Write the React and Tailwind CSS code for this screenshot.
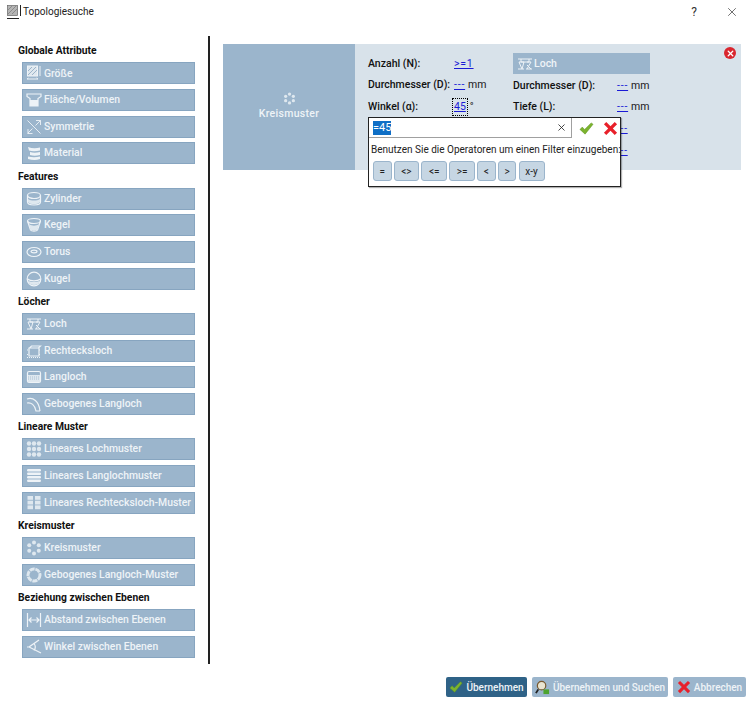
import { X } from "lucide-react";

const stroke = { fill: "none", stroke: "#eef3f7", strokeWidth: 1.2 };

// small white feature glyphs used on the blue buttons
const glyphs = {
  size: (
    <>
      <rect x="1.500" y="1" width="10" height="10" fill="#dfe8ef" stroke="#eef3f7" strokeWidth="1" />
      <path d="M2 10l8-8M2 6l4-4M6 10l5-5" stroke="#8aa6c0" strokeWidth="0.8" />
      <path d="M14 1v10M1 14h11M12 14l-1.500-1M1 14l1.500-1" {...stroke} strokeWidth="1" />
    </>
  ),
  area: (
    <>
      <path d="M1 2h14v2.500l-3 2V14H4V6.500l-3-2z" {...stroke} />
      <path d="M4 8h8v6H4z" fill="#eef3f7" />
    </>
  ),
  symmetry: <path d="M1.500 14.500l5-5M2 10v4.500h4.500M9.500 6.500l5-5M10 1.500h4.500V6M1.500 1.500l13 13" {...stroke} strokeWidth="0.9" />,
  material: <path d="M2 2c4 1.500 8 1.500 12 .5v3c-4 1-8 1-11 0zM4 7c3 1 6 1 10 0v3c-4 1-7 1-10 0zM2 11.500c4 1 8 1 12 0V14c-4 1.500-8 1-12 0z" fill="#eef3f7" />,
  cylinder: (
    <>
      <ellipse cx="8" cy="4.500" rx="6.500" ry="3" {...stroke} />
      <path d="M1.500 4.500v6.500c0 2 3 3 6.500 3s6.500-1 6.500-3V4.500" {...stroke} />
      <path d="M2 8c3 2 9 2 12 0v3c-2 3-10 3-12 0z" fill="#dfe8ef" />
    </>
  ),
  cone: (
    <>
      <ellipse cx="8" cy="4" rx="6.500" ry="2.500" {...stroke} />
      <path d="M1.500 4l3 9c1 1.500 6 1.500 7 0l3-9" {...stroke} />
      <path d="M3 7.500c3 1.500 7 1.500 10 0l-1.500 5c-1 1.500-6 1.500-7 0z" fill="#dfe8ef" />
    </>
  ),
  torus: (
    <>
      <ellipse cx="8" cy="8" rx="7" ry="4.500" {...stroke} />
      <ellipse cx="8" cy="7.500" rx="3" ry="1.300" {...stroke} />
    </>
  ),
  sphere: (
    <>
      <circle cx="8" cy="8" r="6.800" {...stroke} />
      <path d="M1.500 8c3 2.500 10 2.500 13 0" {...stroke} />
      <path d="M2 9.500c3 2 9 2 12 0-1 3-3 4.500-6 4.500s-5-1.500-6-4.500z" fill="#dfe8ef" />
    </>
  ),
  hole: <path d="M1 3h14M4 3v3h8V3M1 13h6M9 13h6M2 6h5M2 6l3 7M7 6L5 13M14 6l-4 7M10 6h4M10 9l4 4" {...stroke} strokeWidth="1" />,
  rect: (
    <>
      <path d="M3.500 5l2-2h9l-2 2zM3 5h10v8H3z" {...stroke} />
      <path d="M1 14.500h14M1 11.500h2M13 11.500h2M1 7h2M13 7h2" stroke="#eef3f7" strokeWidth="1" strokeDasharray="1 1" />
    </>
  ),
  slot: (
    <>
      <rect x="1.500" y="2.500" width="13" height="11" rx="1.500" {...stroke} />
      <rect x="2" y="6" width="12" height="7" fill="#dfe8ef" />
      <path d="M2 8h12M2 10h12" stroke="#8aa6c0" strokeWidth="0.6" strokeDasharray="1 1" />
    </>
  ),
  bent: <path d="M1 3c6-2 12 2 13 12M1 7c4-1 8 2 9 8h4" {...stroke} />,
  holes: (
    <>
      {[3, 8, 13].flatMap((x) =>
        [2.500, 8, 13.500].map((y) => <circle key={`${x}-${y}`} cx={x} cy={y} r="2.200" fill="#dfe8ef" />)
      )}
    </>
  ),
  slots: (
    <>
      {[1, 4.500, 8, 11.500].map((y) => (
        <rect key={y} x="1" y={y} width="14" height="2.400" rx="1.200" fill="#eef3f7" />
      ))}
    </>
  ),
  rects: (
    <>
      {[1.500, 9].flatMap((x) =>
        [1, 5.700, 10.400].map((y) => <rect key={`${x}-${y}`} x={x} y={y} width="5.500" height="3.800" fill="#dfe8ef" />)
      )}
    </>
  ),
  circle: (
    <>
      {[0, 60, 120, 180, 240, 300].map((a) => (
        <circle
          key={a}
          cx={8 + 5.500 * Math.sin((a * Math.PI) / 180)}
          cy={8 - 5.500 * Math.cos((a * Math.PI) / 180)}
          r="2"
          fill="#dfe8ef"
        />
      ))}
    </>
  ),
  ring: <circle cx="8" cy="8" r="6" fill="none" stroke="#dfe8ef" strokeWidth="3" strokeDasharray="5 0.800" />,
  distance: <path d="M1.500 1v14M14.500 1v14M3 8h10M5.500 5.500L3 8l2.500 2.500M10.500 5.500L13 8l-2.500 2.500" {...stroke} />,
  angle: <path d="M13 1L3 8l12 6M1 8h2M8 4.500c1.500 2 1.500 5 0 7" {...stroke} />,
};

function Glyph({ name, className = "w-[16px] h-[16px]" }) {
  return (
    <svg viewBox="0 0 16 16" className={`${className} shrink-0`}>
      {glyphs[name]}
    </svg>
  );
}

const groups = [
  {
    title: "Globale Attribute",
    items: [
      ["size", "Größe"],
      ["area", "Fläche/Volumen"],
      ["symmetry", "Symmetrie"],
      ["material", "Material"],
    ],
  },
  {
    title: "Features",
    items: [
      ["cylinder", "Zylinder"],
      ["cone", "Kegel"],
      ["torus", "Torus"],
      ["sphere", "Kugel"],
    ],
  },
  {
    title: "Löcher",
    items: [
      ["hole", "Loch"],
      ["rect", "Rechtecksloch"],
      ["slot", "Langloch"],
      ["bent", "Gebogenes Langloch"],
    ],
  },
  {
    title: "Lineare Muster",
    items: [
      ["holes", "Lineares Lochmuster"],
      ["slots", "Lineares Langlochmuster"],
      ["rects", "Lineares Rechtecksloch-Muster"],
    ],
  },
  {
    title: "Kreismuster",
    items: [
      ["circle", "Kreismuster"],
      ["ring", "Gebogenes Langloch-Muster"],
    ],
  },
  {
    title: "Beziehung zwischen Ebenen",
    items: [
      ["distance", "Abstand zwischen Ebenen"],
      ["angle", "Winkel zwischen Ebenen"],
    ],
  },
];

function Check({ className }) {
  return (
    <svg viewBox="0 0 16 16" className={className}>
      <path d="M1 9l2.500-2.500L6 9l7-7 2 1.500L6.500 14z" fill="#7cb32e" stroke="#5a8f1f" strokeWidth="0.5" />
    </svg>
  );
}

function Cross({ className }) {
  return (
    <svg viewBox="0 0 16 16" className={className}>
      <path d="M1 3.500L3.500 1 8 5.500 12.500 1 15 3.500 10.500 8l4.500 4.500-2.500 2.500L8 10.500 3.500 15 1 12.500 5.500 8z" fill="#e8202a" />
    </svg>
  );
}

function Dashes({ children = "---" }) {
  return <span className="text-[#1a1ad6] underline tracking-[0.8px]">{children}</span>;
}

function FilterRow({ label, value, unit, left }) {
  return (
    <div className="h-[21.500px] flex items-center whitespace-nowrap text-[10.500px]">
      <span className={`font-medium text-[#111] ${left}`}>{label}</span>
      {value}
      {unit && <span className="ml-[3px]">{unit}</span>}
    </div>
  );
}

export default function App() {
  return (
    <div className="w-[750px] h-[704px] bg-white flex flex-col text-[10px] text-[#1a1a1a] font-['Roboto',sans-serif] overflow-hidden">
      {/* Title bar */}
      <div className="h-[23px] flex items-center pl-[6px] shrink-0">
        <svg viewBox="0 0 16 16" className="w-[16px] h-[16px] shrink-0">
          <rect x="1.500" y="1.500" width="10" height="10" fill="#b5b5b5" stroke="#666" strokeWidth="0.7" />
          <path d="M2 10l8-8M2 6l4-4M6 10l5-5" stroke="#777" strokeWidth="0.7" />
          <path d="M14.500 1v11M1 14.500h12" stroke="#222" strokeWidth="1" />
        </svg>
        <span className="ml-[1px] text-[10px] text-[#222]">Topologiesuche</span>
        <span className="ml-auto text-[12px] mr-[28px] text-[#333]">?</span>
        <X className="w-[14px] h-[14px] mr-[11px] text-[#333]" strokeWidth={1.2} />
      </div>

      <div className="flex h-[641px] pt-[13px] shrink-0">
        {/* Sidebar */}
        <aside className="w-[210px] h-[628px] border-r-2 border-[#222] pl-[18px] pr-[13px] pt-[3px] shrink-0">
          {groups.map((group) => (
            <div key={group.title}>
              <div className="h-[23.330px] flex items-center font-bold text-[10.300px] text-[#111] whitespace-nowrap pt-[1px]">
                {group.title}
              </div>
              <div className="flex flex-col gap-[4.670px] pl-[4px]">
                {group.items.map(([icon, label]) => (
                  <button
                    key={label}
                    className="h-[22px] flex items-center gap-[2px] bg-[#9bb5cc] border border-[#87a5c0] pl-[3px] font-medium text-[10.400px] text-[#eef3f7] whitespace-nowrap"
                  >
                    <Glyph name={icon} />
                    {label}
                  </button>
                ))}
              </div>
            </div>
          ))}
        </aside>

        {/* Selected feature card */}
        <main className="flex-1 pl-[13px] pr-[9px] pt-[8px]">
          <div className="relative h-[126px] flex bg-[#d8e2ea]">
            <div className="w-[132px] bg-[#9bb5cc] flex flex-col items-center justify-center text-[#eef3f7] font-medium text-[10.500px] tracking-[0.3px]">
              <Glyph name="circle" className="w-[13px] h-[13px]" />
              <span className="mt-[1px]">Kreismuster</span>
            </div>

            <div className="pl-[13px] pt-[9px] w-[158px]">
              <FilterRow label="Anzahl (N):" left="w-[86px]" value={<Dashes>{">=1"}</Dashes>} />
              <FilterRow label="Durchmesser (D):" left="w-[86px]" value={<Dashes />} unit="mm" />
              <FilterRow
                label="Winkel (α):"
                left="w-[85px]"
                value={<span className="text-[#1a1ad6] underline outline-1 outline-dotted outline-black px-[1px]">45</span>}
                unit="°"
              />
            </div>

            <div className="w-[137px] pt-[9px]">
              <div className="h-[21px] flex items-center gap-[1px] bg-[#9bb5cc] pl-[4px] font-medium text-[10.500px] text-[#eef3f7]">
                <Glyph name="hole" />
                Loch
              </div>
              <div className="pt-[1px]">
                <FilterRow label="Durchmesser (D):" left="w-[104px]" value={<Dashes />} unit="mm" />
                <FilterRow label="Tiefe (L):" left="w-[104px]" value={<Dashes />} unit="mm" />
                <div className="h-[21.500px] flex items-center pl-[104px]">
                  <Dashes />
                </div>
                <div className="h-[21.500px] flex items-center pl-[104px]">
                  <Dashes />
                </div>
              </div>
            </div>

            <span className="absolute top-[3px] right-[5px] w-[12px] h-[12px] rounded-full bg-[#d9262e] flex items-center justify-center">
              <X className="w-[9px] h-[9px] text-white" strokeWidth={3.500} />
            </span>

            {/* Operator popup */}
            <div className="absolute left-[145px] top-[73px] w-[253px] h-[70px] bg-white border border-[#222] shadow-[1px_1px_1px_rgba(0,0,0,0.3)]">
              <div className="flex items-center h-[20px]">
                <div className="w-[203px] h-[20px] border-b border-r border-[#a0a0a0] flex items-center pl-[4px]">
                  <span className="bg-[#0f6fc6] text-white text-[11px] leading-[14px]">=45</span>
                  <X className="ml-auto mr-[4px] w-[11px] h-[11px] text-[#222]" strokeWidth={1.800} />
                </div>
                <Check className="w-[15px] h-[15px] ml-[7px]" />
                <Cross className="w-[15px] h-[15px] ml-[9px]" />
              </div>
              <div className="h-[23px] flex items-center pl-[2px] text-[#222] whitespace-nowrap">
                Benutzen Sie die Operatoren um einen Filter einzugeben:
              </div>
              <div className="flex gap-[2.200px] pl-[4px]">
                {[
                  ["=", "w-[18.500px]"],
                  ["<>", "w-[25.500px]"],
                  ["<=", "w-[25.700px]"],
                  [">=", "w-[25.700px]"],
                  ["<", "w-[18.500px]"],
                  [">", "w-[18.500px]"],
                  ["x-y", "w-[26px]"],
                ].map(([op, width]) => (
                  <button
                    key={op}
                    className={`${width} h-[20px] rounded-[3px] bg-[#c6d6e3] border border-[#9bb5cc] text-[#222] flex items-center justify-center`}
                  >
                    {op}
                  </button>
                ))}
              </div>
            </div>
          </div>
        </main>
      </div>

      {/* Footer buttons */}
      <div className="flex justify-end gap-[5px] pt-[13px] pr-[4px] whitespace-nowrap">
        <button className="w-[81px] h-[20px] rounded-[2px] bg-[#2f6287] text-[#eef3f7] font-medium flex items-center justify-center gap-[3px]">
          <Check className="w-[14px] h-[14px]" />
          Übernehmen
        </button>
        <button className="w-[136px] h-[20px] rounded-[2px] bg-[#9bb5cc] text-[#eef3f7] font-medium flex items-center justify-center gap-[3px]">
          <svg viewBox="0 0 16 16" className="w-[15px] h-[15px] shrink-0">
            <circle cx="7" cy="6" r="4.500" fill="#e8e4d0" stroke="#7a5a30" strokeWidth="1.300" />
            <path d="M3.500 10L1 14" stroke="#222" strokeWidth="2" />
            <rect x="9" y="10" width="6" height="5" fill="#4da32f" />
          </svg>
          Übernehmen und Suchen
        </button>
        <button className="w-[73px] h-[20px] rounded-[2px] bg-[#9bb5cc] text-[#eef3f7] font-medium flex items-center justify-center gap-[3px]">
          <Cross className="w-[14px] h-[14px]" />
          Abbrechen
        </button>
      </div>
    </div>
  );
}
